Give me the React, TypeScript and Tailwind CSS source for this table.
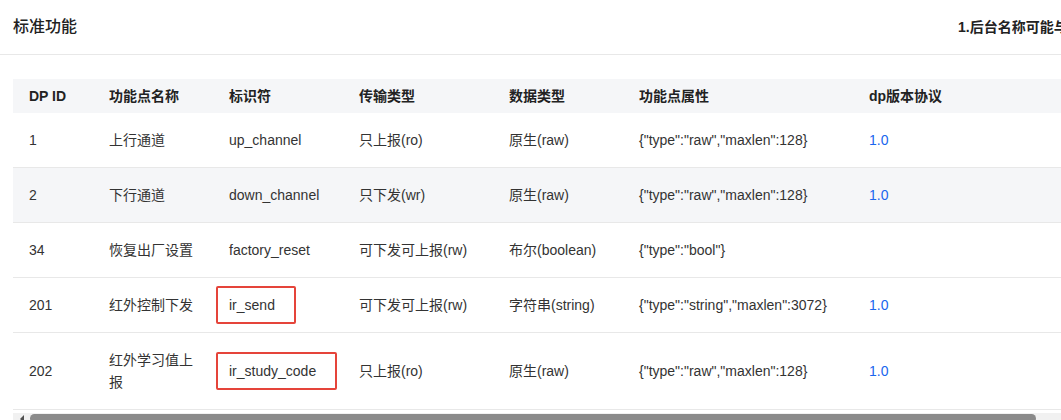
import React from 'react';

interface Row {
  id: string;
  name: string[];
  code: string;
  mode: string;
  type: string;
  prop: string;
  ver: string;
  box?: string;
  shade?: boolean;
}

const rows: Row[] = [
  { id: '1', name: ['上行通道'], code: 'up_channel', mode: '只上报(ro)', type: '原生(raw)', prop: '{"type":"raw","maxlen":128}', ver: '1.0' },
  { id: '2', name: ['下行通道'], code: 'down_channel', mode: '只下发(wr)', type: '原生(raw)', prop: '{"type":"raw","maxlen":128}', ver: '1.0', shade: true },
  { id: '34', name: ['恢复出厂设置'], code: 'factory_reset', mode: '可下发可上报(rw)', type: '布尔(boolean)', prop: '{"type":"bool"}', ver: '' },
  { id: '201', name: ['红外控制下发'], code: 'ir_send', mode: '可下发可上报(rw)', type: '字符串(string)', prop: '{"type":"string","maxlen":3072}', ver: '1.0', box: 'w-[80px]' },
  { id: '202', name: ['红外学习值上', '报'], code: 'ir_study_code', mode: '只上报(ro)', type: '原生(raw)', prop: '{"type":"raw","maxlen":128}', ver: '1.0', box: 'w-[121px]' },
];

const heads = ['DP ID', '功能点名称', '标识符', '传输类型', '数据类型', '功能点属性', 'dp版本协议'];
const cols = ['w-[80px]', 'w-[120px]', 'w-[130px]', 'w-[150px]', 'w-[130px]', 'w-[230px]', 'w-[200px]'];

const App: React.FC = () => {
  return (
    <div className="w-[1061px] h-[420px] overflow-hidden bg-white text-[#333] text-[14px] leading-[22px] font-['Liberation_Sans','Noto_Sans_CJK_SC',sans-serif]">
      <div className="flex items-center h-[55px] border-b border-[#e8e8e8] pl-[13px]">
        <div className="w-[945px] shrink-0 text-[16px] font-medium text-[#222]">标准功能</div>
        <div className="whitespace-nowrap text-[14px] font-semibold text-[#222]">1.后台名称可能与</div>
      </div>

      <div className="pl-[13px] pt-[24px]">
        <div className="w-[1100px]">
          <div className="flex bg-[#f5f6f8] font-semibold text-[#222]">
            {heads.map((h, i) => (
              <div key={h} className={`${cols[i]} shrink-0 pl-4 py-[6px] whitespace-nowrap`}>{h}</div>
            ))}
          </div>
          {rows.map((r) => (
            <div key={r.id} className={`flex items-center border-b border-[#e8e8e8] ${r.shade ? 'bg-[#f5f6f8]' : 'bg-white'}`}>
              <div className="w-[80px] shrink-0 pl-4 py-4">{r.id}</div>
              <div className="w-[120px] shrink-0 pl-4 pr-3 py-4">
                {r.name.map((n) => <div key={n}>{n}</div>)}
              </div>
              <div className="w-[130px] shrink-0 pl-4 py-4 relative">
                {r.code}
                {r.box && (
                  <div className={`absolute top-1/2 -translate-y-1/2 left-[3px] h-[38px] border-2 border-[#e5443a] rounded-[2px] ${r.box}`} />
                )}
              </div>
              <div className="w-[150px] shrink-0 pl-4 py-4 whitespace-nowrap">{r.mode}</div>
              <div className="w-[130px] shrink-0 pl-4 py-4 whitespace-nowrap">{r.type}</div>
              <div className="w-[230px] shrink-0 pl-4 py-4 whitespace-nowrap">{r.prop}</div>
              <div className="w-[200px] shrink-0 pl-4 py-4 text-[#1a66ee]">{r.ver}</div>
            </div>
          ))}
        </div>
        <div className="flex items-center h-[11px] mt-[3px] bg-[#f1f1f1] w-[1048px]">
          <div className="w-[17px] flex justify-center">
            <div className="w-0 h-0 border-y-[4px] border-y-transparent border-r-[4px] border-r-[#505050]" />
          </div>
          <div className="w-[1006px] h-[9px] rounded-full bg-[#8a8a8a]" />
        </div>
      </div>
    </div>
  );
};

export default App;
